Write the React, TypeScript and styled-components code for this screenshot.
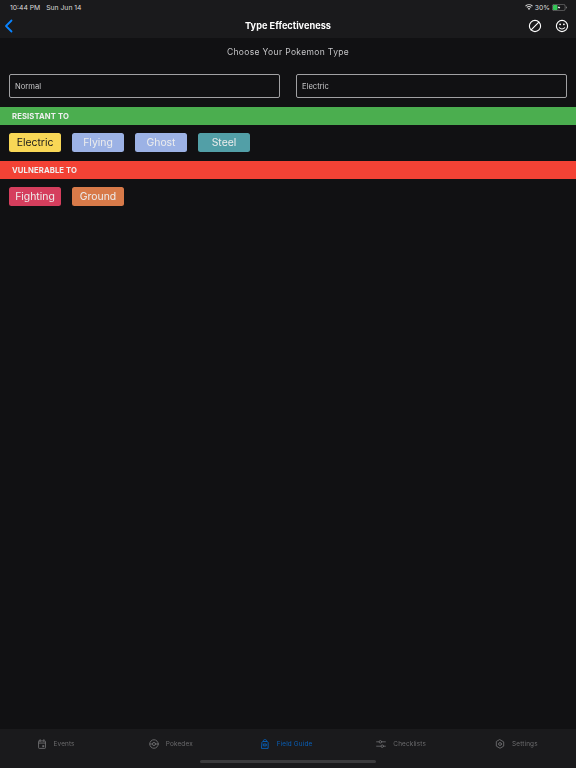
import React from 'react';
import styled, { createGlobalStyle } from 'styled-components';

const GlobalStyle = createGlobalStyle`
    html, body {
        margin: 0;
        padding: 0;
        background: #111113;
    }
    * {
        box-sizing: border-box;
    }
`;

const Page = styled.div`
    position: relative;
    display: flex;
    flex-direction: column;
    width: 576px;
    height: 768px;
    overflow: hidden;
    color: #fff;
    font-family: Inter, "Liberation Sans", sans-serif;
    will-change: opacity;
    opacity: 0.999;
`;

const Header = styled.header`
    display: flex;
    flex-direction: column;
    height: 38px;
    background: #1b1b1d;
`;

const StatusBar = styled.div`
    display: flex;
    justify-content: space-between;
    align-items: center;
    height: 14px;
    padding: 0 9px 0 10px;
    font-size: 6.8px;
    color: #dcdcdc;
`;

const StatusGroup = styled.div`
    display: flex;
    align-items: center;
    gap: 2px;
`;

const StatusTime = styled.span`
    margin-right: 4px;
`;

const NavBar = styled.div`
    display: flex;
    align-items: center;
    justify-content: space-between;
    flex: 1;
    padding: 0 7px 0 4px;
    position: relative;
`;

const NavTitle = styled.div`
    position: absolute;
    left: 0;
    right: 0;
    top: 5px;
    text-align: center;
    font-size: 9.2px;
    font-weight: 700;
    line-height: 14px;
`;

const NavActions = styled.div`
    display: flex;
    align-items: center;
    gap: 13px;
`;

const Subtitle = styled.div`
    margin-top: 8px;
    height: 12px;
    line-height: 12px;
    text-align: center;
    font-size: 8.5px;
    letter-spacing: 0.35px;
    color: #c6c6c8;
`;

const InputRow = styled.div`
    display: grid;
    grid-template-columns: 271px 271px;
    justify-content: space-between;
    margin-top: 16px;
    padding: 0 9px;
`;

const TypeInput = styled.div`
    display: flex;
    align-items: center;
    height: 24px;
    padding: 0 5px;
    border: 1px solid #a2a2a4;
    border-radius: 2px;
    font-size: 7.6px;
    color: #c8c8ca;
`;

const SectionBar = styled.div<{ $color: string; $top: number }>`
    display: flex;
    align-items: center;
    height: 18px;
    margin-top: ${(p) => p.$top}px;
    padding: 0 12px;
    background: ${(p) => p.$color};
    font-size: 7.7px;
    font-weight: 700;
    letter-spacing: 0.1px;
    color: #f0f0f0;
`;

const ChipRow = styled.div`
    display: flex;
    gap: 11px;
    padding: 8px 9px 0;
`;

const Chip = styled.div<{ $bg: string; $dark?: boolean }>`
    display: flex;
    align-items: center;
    justify-content: center;
    width: 52px;
    height: 19px;
    border-radius: 2.5px;
    background: ${(p) => p.$bg};
    color: ${(p) => (p.$dark ? '#1c1c1c' : '#eeeeee')};
    font-size: 10.4px;
`;

const TabBar = styled.nav`
    display: grid;
    grid-template-columns: repeat(5, 1fr);
    height: 39px;
    margin-top: auto;
    padding-top: 9px;
    background: #1b1b1d;
`;

const Tab = styled.div<{ $active?: boolean }>`
    display: flex;
    justify-content: center;
    align-items: center;
    gap: 7px;
    height: 12px;
    padding-right: 4px;
    font-size: 6.4px;
    letter-spacing: 0.15px;
    color: ${(p) => (p.$active ? '#0a60b8' : '#6c6c6e')};
`;

const HomeIndicator = styled.div`
    position: absolute;
    left: 200px;
    bottom: 5px;
    width: 176px;
    height: 3px;
    border-radius: 2px;
    background: #3c3c3e;
`;

const IconBase = ({ size, children, fill = 'none', stroke = 'currentColor', width = 1.6 }: any) => (
    <svg width={size} height={size} viewBox="0 0 16 16" fill={fill} stroke={stroke} strokeWidth={width} strokeLinecap="round" strokeLinejoin="round">
        {children}
    </svg>
);

const Wifi = () => (
    <svg width="8" height="6" viewBox="0 0 18 14" fill="#dcdcdc">
        <path d="M9 14 6 10.5a4.4 4.4 0 0 1 6 0Z" />
        <path d="M4.6 9 3 7.2a9 9 0 0 1 12 0L13.4 9a6.7 6.7 0 0 0-8.8 0Z" />
        <path d="M1.6 5.8 0 4a13.4 13.4 0 0 1 18 0l-1.6 1.8a11 11 0 0 0-14.8 0Z" />
    </svg>
);

const Battery = () => (
    <svg width="15" height="7" viewBox="0 0 30 14">
        <rect x="0.7" y="0.7" width="25.6" height="12.6" rx="3.5" fill="none" stroke="#8c8c8c" strokeWidth="1.2" />
        <rect x="2" y="2" width="9" height="10" rx="1.5" fill="#35c759" />
        <path d="M28 5v4c1-.3 1.7-1 1.7-2S29 5.300 28 5Z" fill="#8c8c8c" />
        <path d="M15 2.500 11.500 8H14l-1 3.500L16.500 6H14Z" fill="#fff" />
    </svg>
);

const Back = () => (
    <svg width="10" height="14" viewBox="0 0 10 14" fill="none" stroke="#0a84ff" strokeWidth="1.8" strokeLinecap="round" strokeLinejoin="round">
        <path d="M7.500 1.500 2 7l5.500 5.500" />
    </svg>
);

const Blocked = () => (
    <IconBase size={14} width={1.3}>
        <circle cx="8" cy="8" r="6.400" />
        <path d="M3.600 12.400 12.400 3.600" />
    </IconBase>
);

const Smile = () => (
    <IconBase size={14} width={1.3}>
        <circle cx="8" cy="8" r="6.400" />
        <path d="M5 10c.8 1 1.800 1.400 3 1.400s2.200-.4 3-1.400" />
        <path d="M5.800 6h.1M10.100 6h.1" strokeWidth="2" />
    </IconBase>
);

const CalendarIcon = () => (
    <IconBase size={10} width={1.5}>
        <rect x="2.500" y="3" width="11" height="12" rx="1" />
        <path d="M5 1v3M11 1v3M2.500 6.500h11" />
        <rect x="8.500" y="10" width="3" height="3" fill="currentColor" stroke="none" />
    </IconBase>
);

const BallIcon = () => (
    <IconBase size={10} width={1.5}>
        <circle cx="8" cy="8" r="6.800" />
        <path d="M1.500 8h3.500M11 8h3.500" />
        <circle cx="8" cy="8" r="2.500" />
    </IconBase>
);

const GuideIcon = () => (
    <IconBase size={10} width={1.5}>
        <path d="M3 5.500C3 4.500 4 4 5 4h6c1 0 2 .5 2 1.500V15H3Z" />
        <path d="M5.500 4V2.500C5.500 1.500 6.500 1 8 1s2.500.5 2.500 1.500V4" />
        <path d="M6 8h4v3H6Z" />
    </IconBase>
);

const SlidersIcon = () => (
    <IconBase size={10} width={1.4}>
        <path d="M1 4.500h4M9 4.500h6M1 11.500h7M12 11.500h3" />
        <circle cx="7" cy="4.500" r="2" />
        <circle cx="10" cy="11.500" r="2" />
    </IconBase>
);

const GearIcon = () => (
    <IconBase size={10} width={1.5}>
        <path d="M8 1.200 13.900 4.600V11.400L8 14.800 2.100 11.400V4.600Z" />
        <circle cx="8" cy="8" r="2.300" />
    </IconBase>
);

const tabs = [
    { label: 'Events', icon: <CalendarIcon /> },
    { label: 'Pokedex', icon: <BallIcon /> },
    { label: 'Field Guide', icon: <GuideIcon />, active: true },
    { label: 'Checklists', icon: <SlidersIcon /> },
    { label: 'Settings', icon: <GearIcon /> },
];

const resistant = [
    { name: 'Electric', bg: '#f9d857', dark: true },
    { name: 'Flying', bg: '#9db3e6' },
    { name: 'Ghost', bg: '#9db3e6' },
    { name: 'Steel', bg: '#53a0a8' },
];

const vulnerable = [
    { name: 'Fighting', bg: '#d63f5e' },
    { name: 'Ground', bg: '#d97b4a' },
];

export default function App() {
    return (
        <Page>
            <GlobalStyle />
            <Header>
                <StatusBar>
                    <StatusGroup>
                        <StatusTime>10:44 PM</StatusTime>
                        <span>Sun Jun 14</span>
                    </StatusGroup>
                    <StatusGroup>
                        <Wifi />
                        <span>30%</span>
                        <Battery />
                    </StatusGroup>
                </StatusBar>
                <NavBar>
                    <Back />
                    <NavTitle>Type Effectiveness</NavTitle>
                    <NavActions>
                        <Blocked />
                        <Smile />
                    </NavActions>
                </NavBar>
            </Header>
            <Subtitle>Choose Your Pokemon Type</Subtitle>
            <InputRow>
                <TypeInput>Normal</TypeInput>
                <TypeInput>Electric</TypeInput>
            </InputRow>
            <SectionBar $color="#4caf50" $top={9}>RESISTANT TO</SectionBar>
            <ChipRow>
                {resistant.map((t) => (
                    <Chip key={t.name} $bg={t.bg} $dark={t.dark}>{t.name}</Chip>
                ))}
            </ChipRow>
            <SectionBar $color="#f44336" $top={9}>VULNERABLE TO</SectionBar>
            <ChipRow>
                {vulnerable.map((t) => (
                    <Chip key={t.name} $bg={t.bg}>{t.name}</Chip>
                ))}
            </ChipRow>
            <TabBar>
                {tabs.map((t) => (
                    <Tab key={t.label} $active={t.active}>
                        {t.icon}
                        <span>{t.label}</span>
                    </Tab>
                ))}
            </TabBar>
            <HomeIndicator />
        </Page>
    );
}
